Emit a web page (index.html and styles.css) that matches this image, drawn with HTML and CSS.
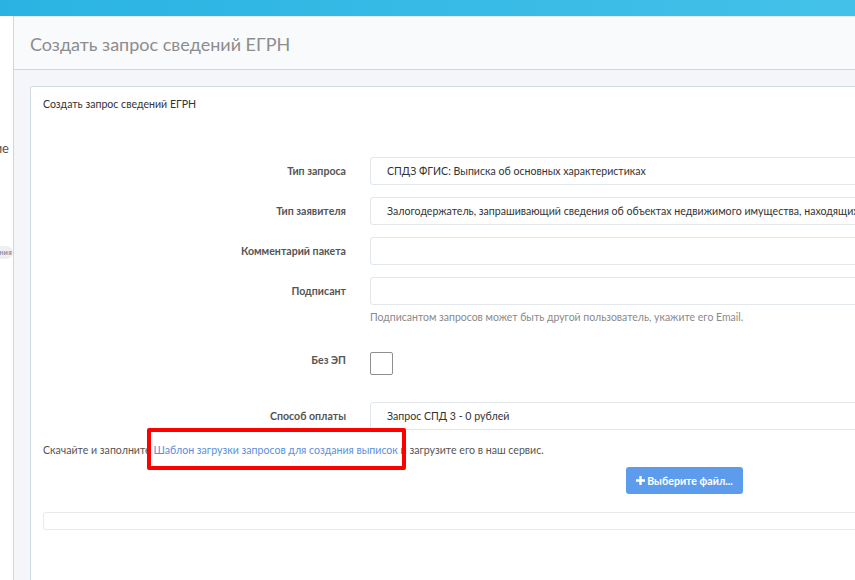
FILE: index.html
```html
<!DOCTYPE html>
<html lang="ru">
<head>
<meta charset="utf-8">
<title>Создать запрос сведений ЕГРН</title>
<link rel="stylesheet" href="styles.css">
</head>
<body>
<div class="topbar"></div>
<div class="layout">
  <aside class="sidebar">
    <div class="side-item">Входящие</div>
    <div class="side-pill">Уведомления</div>
  </aside>
  <main class="main">
    <div class="page-header">
      <h1 class="page-title">Создать запрос сведений ЕГРН</h1>
    </div>
    <div class="content">
      <section class="card">
        <div class="card-title">Создать запрос сведений ЕГРН</div>
        <div class="form">
          <div class="row">
            <label class="label">Тип запроса</label>
            <div class="field"><div class="input">СПДЗ ФГИС: Выписка об основных характеристиках</div></div>
          </div>
          <div class="row">
            <label class="label">Тип заявителя</label>
            <div class="field"><div class="input">Залогодержатель, запрашивающий сведения об объектах недвижимого имущества, находящихся в залоге</div></div>
          </div>
          <div class="row">
            <label class="label">Комментарий пакета</label>
            <div class="field"><div class="input"></div></div>
          </div>
          <div class="row">
            <label class="label">Подписант</label>
            <div class="field">
              <div class="input"></div>
              <div class="help">Подписантом запросов может быть другой пользователь, укажите его Email.</div>
            </div>
          </div>
          <div class="row row-check">
            <label class="label label-top">Без ЭП</label>
            <div class="field"><span class="checkbox"></span></div>
          </div>
          <div class="row row-pay">
            <label class="label">Способ оплаты</label>
            <div class="field"><div class="input">Запрос СПД 3 - 0 рублей</div></div>
          </div>
        </div>
        <p class="note">Скачайте и заполните <a class="link" href="#">Шаблон загрузки запросов для создания выписок</a> и загрузите его в наш сервис.</p>
        <div class="upload">
          <button class="btn" type="button"><svg class="plus" width="9" height="9" viewBox="0 0 9 9"><path d="M3.3 0h2.4v3.3H9v2.4H5.7V9H3.3V5.7H0V3.3h3.3z" fill="#fff"/></svg>Выберите файл...</button>
        </div>
        <div class="files"></div>
      </section>
    </div>
  </main>
</div>
<div class="highlight"></div>
</body>
</html>
```

FILE: styles.css
```css
html, body {
  margin: 0;
  padding: 0;
}
body {
  width: 855px;
  height: 580px;
  overflow: hidden;
  font-family: "Lato", "Liberation Sans", sans-serif;
  color: #555;
  background: #f4f6f9;
  position: relative;
}
.topbar {
  height: 16px;
  background: linear-gradient(90deg, #2ab3e2 0%, #43c1e9 100%);
}
.layout {
  display: flex;
  height: 564px;
}
.sidebar {
  width: 13px;
  flex: none;
  background: #fff;
  border-right: 1px solid #cfd6dd;
  overflow: hidden;
  display: flex;
  flex-direction: column;
  align-items: flex-end;
}
.side-item {
  margin-top: 124px;
  font-size: 13px;
  line-height: 16px;
  color: #555;
  white-space: nowrap;
  padding-right: 4px;
}
.side-pill {
  margin-top: 90px;
  font-size: 7px;
  font-weight: 700;
  line-height: 13px;
  color: #7f8fa8;
  background: #eeeff1;
  border-radius: 7px;
  padding: 0 1px 0 6px;
  white-space: nowrap;
  letter-spacing: 0.3px;
}
.main {
  flex: 1;
  min-width: 0;
  display: flex;
  flex-direction: column;
}
.page-header {
  height: 52px;
  background: #f9fafc;
  border-top: 1px solid #e3e8ec;
  border-bottom: 1px solid #cfd8dc;
  display: flex;
  align-items: center;
  padding-left: 16px;
}
.page-title {
  margin: 0;
  font-size: 18px;
  font-weight: 400;
  color: #8d8d8d;
  padding-top: 1px;
}
.content {
  flex: 1;
  padding: 16px 0 0 16px;
  overflow: hidden;
}
.card {
  background: #fff;
  border: 1px solid #d3dce3;
  border-radius: 2px;
  margin-right: -40px;
  height: 600px;
  padding: 9px 12px 0 12px;
}
.card-title {
  font-size: 10.6px;
  line-height: 16px;
  color: #333;
}
.form {
  margin-top: 45px;
  display: flex;
  flex-direction: column;
  gap: 12px;
}
.row {
  display: grid;
  grid-template-columns: 303px 1fr;
  column-gap: 24px;
}
.label {
  text-align: right;
  font-size: 10.6px;
  font-weight: 700;
  color: #555;
  line-height: 16px;
  padding-top: 6px;
}
.label-top {
  padding-top: 0;
}
.field {
  min-width: 0;
}
.input {
  height: 28px;
  box-sizing: border-box;
  border: 1px solid #e2e7eb;
  border-radius: 3px;
  padding: 0 16px;
  font-size: 10.6px;
  line-height: 26px;
  color: #333;
  white-space: nowrap;
  overflow: hidden;
}
.help {
  margin-top: 6px;
  font-size: 10.5px;
  line-height: 12px;
  color: #8a8a8a;
}
.row-check {
  margin-top: 17px;
}
.checkbox {
  display: block;
  width: 23px;
  height: 23px;
  box-sizing: border-box;
  border: 1px solid #8f8f8f;
  border-radius: 2px;
}
.row-pay {
  margin-top: 15px;
}
.note {
  margin: 12px 0 0;
  font-size: 10.6px;
  line-height: 16px;
  color: #555;
}
.link {
  color: #5b8fdc;
  text-decoration: none;
}
.upload {
  margin-top: 9px;
  padding-left: 583px;
}
.btn {
  width: 117px;
  height: 27px;
  border: 0;
  border-radius: 3px;
  background: #5d9cec;
  color: #fff;
  font-family: "Lato", "Liberation Sans", sans-serif;
  font-size: 10.6px;
  font-weight: 700;
  display: flex;
  align-items: center;
  justify-content: center;
  gap: 2px;
  padding: 0;
}
.plus {
  display: block;
}
.files {
  margin-top: 18px;
  height: 16px;
  border: 1px solid #e8eaec;
  border-radius: 3px;
}
.highlight {
  position: absolute;
  left: 147px;
  top: 428px;
  width: 259px;
  height: 42px;
  box-sizing: border-box;
  border: 4px solid #ff0000;
  border-radius: 2px;
}
```
